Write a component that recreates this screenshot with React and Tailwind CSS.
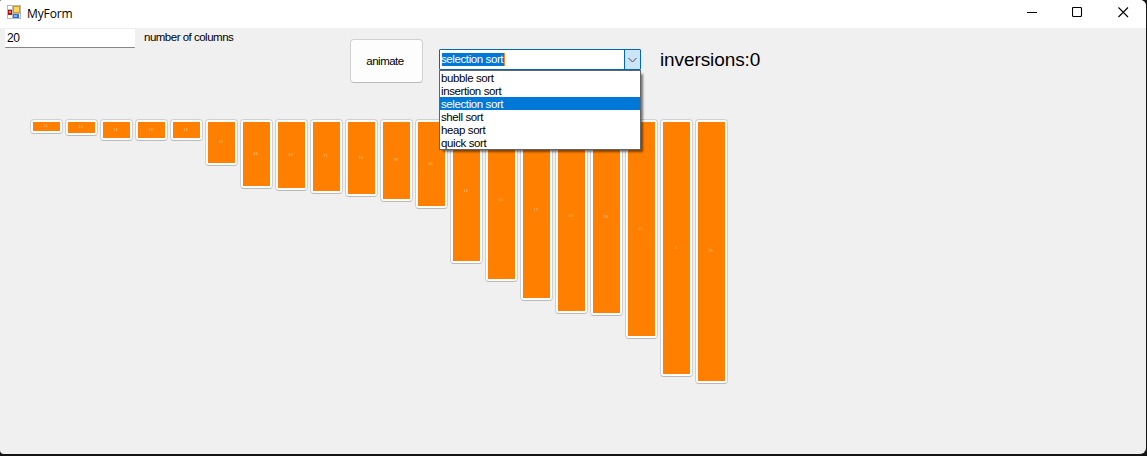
import React from "react";

const bars = [
  { height: 15, value: "11" },
  { height: 17, value: "13" },
  { height: 22, value: "18" },
  { height: 22, value: "18" },
  { height: 22, value: "18" },
  { height: 47, value: "43" },
  { height: 70, value: "66" },
  { height: 72, value: "68" },
  { height: 75, value: "71" },
  { height: 78, value: "74" },
  { height: 83, value: "79" },
  { height: 90, value: "86" },
  { height: 145, value: "14" },
  { height: 163, value: "15" },
  { height: 182, value: "17" },
  { height: 195, value: "19" },
  { height: 197, value: "19" },
  { height: 220, value: "21" },
  { height: 258, value: "2" },
  { height: 265, value: "26" },
];

const options = ["bubble sort", "insertion sort", "selection sort", "shell sort", "heap sort", "quick sort"];

function FormIcon() {
  return (
    <svg className="block h-[14px] w-[14px]" viewBox="0 0 14 14" shapeRendering="crispEdges">
      <rect width="14" height="14" fill="#b9b9b9" />
      <path d="M1 1h4v3H1zM1 10h4v3H1zM12 9h1v4h-1z" fill="#fff" />
      <rect x="1" y="5" width="4" height="5" fill="#b3120c" />
      <rect x="2" y="6" width="2" height="2" fill="#e77a6c" />
      <rect x="6" y="1" width="7" height="7" fill="#d99a10" />
      <rect x="7" y="2" width="5" height="5" fill="#fbd55c" />
      <rect x="6" y="9" width="6" height="4" fill="#2f6fdc" />
      <rect x="7" y="10" width="3" height="2" fill="#82b4fb" />
    </svg>
  );
}

function TitleBar() {
  return (
    <header className="flex h-7 shrink-0 items-center bg-white pl-[7px] pt-px">
      <div className="-mt-[5px]"><FormIcon /></div>
      <h1 className="-mt-[2px] ml-[6px] font-['Open_Sans',sans-serif] text-[12px] leading-4 tracking-[-0.1px] text-black">MyForm</h1>
      <div className="-mt-[4px] ml-auto mr-[17px] flex items-center gap-[35px]">
        <svg className="h-[11px] w-[11px]" viewBox="0 0 11 11"><path d="M1 5.5h10" stroke="#000" /></svg>
        <svg className="h-[11px] w-[11px]" viewBox="0 0 11 11"><rect x=".5" y=".5" width="9" height="9" rx="1" fill="none" stroke="#000" strokeWidth="1.1" /></svg>
        <svg className="h-[11px] w-[11px]" viewBox="0 0 11 11"><path d="M.5.5l9.5 9.5M10 .5L.5 10" stroke="#000" strokeWidth="1.1" /></svg>
      </div>
    </header>
  );
}

function SortSelect() {
  return (
    <div className="relative z-10 ml-4 mt-[21px] w-[202px]">
      <div className="flex h-[21px] rounded-[1px] border border-[#0067c0] bg-white">
        <div className="flex flex-1 items-center pl-[2px]">
          <span className="h-[13px] w-[63px] shrink-0 -indent-px whitespace-nowrap border-r border-[#ff8728] bg-[#0078d7] text-[11.5px] leading-[13px] tracking-[-0.4px] text-white">selection sort</span>
        </div>
        <div className="flex w-[16px] items-center justify-center border-l border-[#0067c0] bg-[#cce4f7]">
          <svg className="h-[6px] w-[9px]" viewBox="0 0 9 6" fill="none"><path d="M.5 1l4 4 4-4" stroke="#444" /></svg>
        </div>
      </div>
      <ul className="absolute left-0 top-[21px] w-[202px] border border-[#646464] bg-white shadow-[3px_3px_2px_-1px_rgba(0,0,0,0.5)]">
        {options.map((o) => (
          <li key={o} className={"h-[13px] pl-px text-[11.5px] leading-[14px] tracking-[-0.4px] " + (o === "selection sort" ? "bg-[#0078d7] text-white" : "text-black")}>{o}</li>
        ))}
      </ul>
    </div>
  );
}

export default function App() {
  return (
    <div className="h-[456px] w-[1147px] overflow-hidden bg-[#151515] pb-[2px] pr-px font-['Liberation_Sans',sans-serif] text-black">
      <div className="flex h-[454px] flex-col overflow-hidden rounded-[6px] rounded-bl-[4px] rounded-tl-[2px] bg-[#f0f0f0]">
        <TitleBar />
        <div className="flex h-[91px] shrink-0 items-start pl-[5px]">
          <div className="h-[20px] w-[130px] rounded-[1px] border-b border-t border-b-[#868686] border-t-[#ececec] bg-white pl-[2px] text-[12px] leading-[19px] tracking-[-0.5px]">20</div>
          <label className="ml-[9px] mt-[3px] w-[206px] whitespace-nowrap text-[11.5px] leading-[13px] tracking-[-0.5px]">number of columns</label>
          <button className="mt-[11px] h-[44px] w-[73px] rounded-[4px] border border-[#d0d0d0] border-b-[#bababa] bg-[#fdfdfd] pr-[3px] pt-[2px] text-[11.5px] tracking-[-0.5px]">animate</button>
          <SortSelect />
          <div className="ml-[19px] mt-[20px] whitespace-nowrap text-[19px] leading-[23px] tracking-[-0.1px]">inversions:0</div>
        </div>
        <div className="flex items-start gap-[2px] pl-[30px]">
          {bars.map((b, i) => (
            <div key={i} className="w-[33px] rounded-[4px] border border-[#d0d0d0] border-b-[#bababa] bg-[#fdfdfd] p-[2px]" style={{ height: b.height }}>
              <div className="flex h-full items-center justify-center bg-[#ff8000] pr-px text-[2.8px] leading-[3px] tracking-[0.6px] text-white/70">{b.value}</div>
            </div>
          ))}
        </div>
      </div>
    </div>
  );
}
